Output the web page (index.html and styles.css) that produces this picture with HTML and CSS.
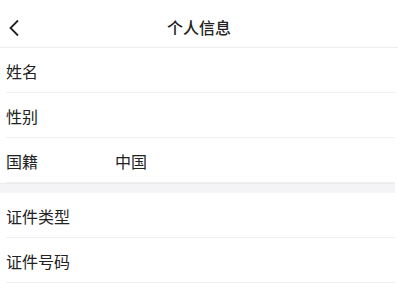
FILE: index.html
```html
<!DOCTYPE html>
<html lang="zh">

<head>
    <meta charset="UTF-8">
    <title>个人信息</title>
    <link rel="stylesheet" href="styles.css">
</head>

<body>
    <header class="topbar">
        <span class="back">
            <svg width="12" height="18" viewBox="0 0 12 18">
                <path d="M10 1.5 L2.5 9 L10 16.5" fill="none" stroke="#222" stroke-width="1.8"/>
            </svg>
        </span>
        <h1>个人信息</h1>
    </header>

    <section class="group">
        <div class="row"><span class="label">姓名</span><span class="value"></span></div>
        <div class="row"><span class="label">性别</span><span class="value"></span></div>
        <div class="row"><span class="label">国籍</span><span class="value">中国</span></div>
    </section>

    <div class="gap"></div>

    <section class="group">
        <div class="row"><span class="label">证件类型</span><span class="value"></span></div>
        <div class="row"><span class="label">证件号码</span><span class="value"></span></div>
    </section>
</body>

</html>
```

FILE: styles.css
```css
body {
    margin: 0;
    background: #fff;
    font-family: "Noto Sans CJK SC", "Noto Sans", sans-serif;
    color: #222;
}

.topbar {
    height: 41px;
    padding-top: 6px;
    border-bottom: 1px solid #eee;
    display: flex;
    align-items: center;
    justify-content: center;
    position: relative;
}

.back {
    position: absolute;
    left: 8px;
    top: 18px;
}

h1 {
    margin: 0;
    font-size: 16px;
    font-weight: 500;
    color: #222;
}

.group {
    padding-left: 6px;
    padding-right: 3px;
}

.row {
    height: 44px;
    border-bottom: 1px solid #f0f0f0;
    display: flex;
    align-items: center;
    font-size: 16px;
    padding-top: 1px;
    box-sizing: border-box;
    height: 45px;
}

.label {
    width: 109px;
}

.gap {
    height: 9px;
    background: #f4f4f6;
    border-top: 1px solid #ebebeb;
    margin-right: 3px;
}
```
